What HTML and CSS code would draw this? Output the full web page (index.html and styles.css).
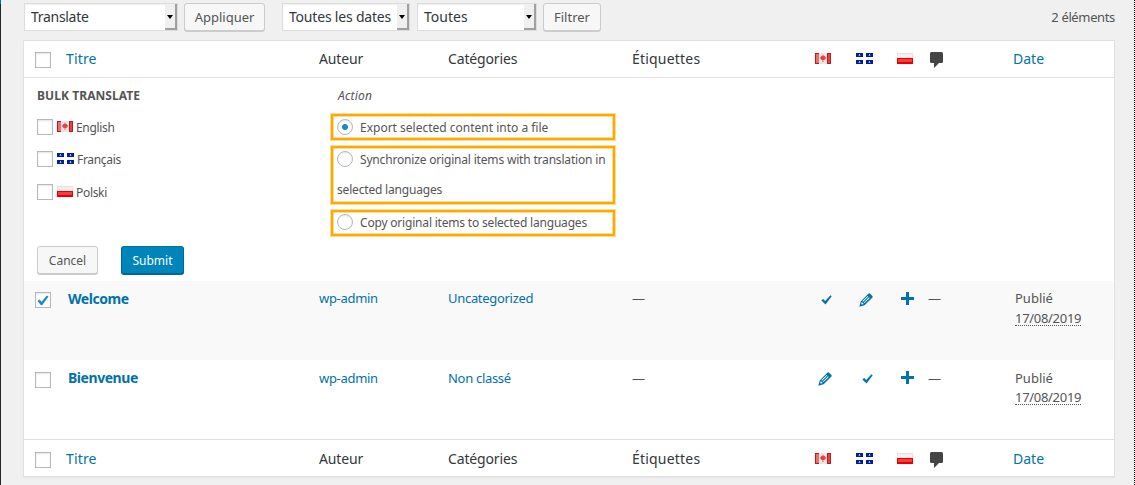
FILE: index.html
```html
<!DOCTYPE html>
<html lang="fr">
<head>
<meta charset="utf-8">
<title>Articles</title>
<link rel="stylesheet" href="styles.css">
</head>
<body>
<svg class="defs" width="0" height="0" aria-hidden="true">
  <symbol id="ca" viewBox="0 0 16 11">
    <rect width="16" height="11" fill="#c91515"/>
    <rect x="1" y="1" width="3" height="9" fill="#ea7070"/><rect x="13" y="1" width="2" height="9" fill="#d84848"/>
    <rect x="4" width="8" height="11" fill="#f0e2e2"/>
    <path d="M8 1.500l1 1.700 1-.3v1.300l1.400.4-2 2.300H8.400V9h-.8V6.900H6.600l-2-2.300L6 4.200V2.900l1 .3z" fill="#e24444"/>
  </symbol>
  <symbol id="qc" viewBox="0 0 17 11">
    <rect width="17" height="11" fill="#fff"/>
    <path d="M0 0h7v4H0zM10 0h7v4h-7zM0 7h7v4H0zM10 7h7v4h-7z" fill="#00209a"/>
    <path d="M3 1h1v2H3zM13 1h1v2h-1zM3 8h1v2H3zM13 8h1v2h-1z" fill="#b9c4ec"/>
    <path d="M2 2h3v1H2zM12 2h3v1h-3zM2 9h3v1H2zM12 9h3v1h-3z" fill="#7185cc" opacity=".4"/>
  </symbol>
  <symbol id="pl" viewBox="0 0 16 11">
    <rect width="16" height="11" fill="#f0dada"/><rect x="1" y="1" width="14" height="5" fill="#f8f0f0"/>
    <rect y="5" width="16" height="6" fill="#e80000"/><rect x="1" y="6" width="14" height="3" fill="#f63c3c"/>
  </symbol>
  <symbol id="comment" viewBox="0 0 13 16">
    <path d="M1.500 0h10Q13 0 13 1.500v8Q13 11 11.500 11H9l-5 5v-5H1.500Q0 11 0 9.500v-8Q0 0 1.500 0z" fill="#444"/>
  </symbol>
  <symbol id="check" viewBox="0 0 11 10">
    <path d="M.3 5.500L2.200 4l2 2L9.500.2l1.200 1.100L4.600 9.600z" fill="#0073aa"/>
  </symbol>
  <symbol id="pencil" viewBox="0 0 14 14">
    <path d="M.3 13.700l1.400-5.300L9.300.8Q10.300-.1 11.400.9l1.800 1.800q1 1 0 2L5.600 12.300z" fill="#0073aa"/>
    <path d="M2.800 9.100l1.900 1.900-1.800.6-.7-.7zM3.500 8.100l5.200-5.200.6.600-5.200 5.200zM4.900 9.500l5.200-5.200.6.600-5.200 5.200z" fill="#fff"/>
  </symbol>
  <symbol id="plus" viewBox="0 0 13 13">
    <path d="M5 0h3v5h5v3H8v5H5V8H0V5h5z" fill="#0073aa"/>
  </symbol>
</svg>
<div class="page">
  <div class="menu-edge"></div>
  <main class="content">
    <div class="toolbar">
      <div class="select s-action"><span>Translate</span><i class="arrow"></i></div>
      <button class="button b-apply"><span>Appliquer</span></button>
      <div class="select s-dates"><span>Toutes les dates</span><i class="arrow"></i></div>
      <div class="select s-cats"><span>Toutes</span><i class="arrow"></i></div>
      <button class="button b-filter"><span>Filtrer</span></button>
      <span class="count">2 éléments</span>
    </div>
    <div class="table">
      <div class="row head">
        <div><i class="cb"></i></div><a class="t-titre">Titre</a><span class="t-auteur">Auteur</span><span class="t-cat">Catégories</span><span class="t-tag">Étiquettes</span>
        <svg width="16" height="11"><use href="#ca"/></svg><svg width="17" height="11"><use href="#qc"/></svg><svg width="16" height="11"><use href="#pl"/></svg><svg class="comment" width="13" height="16"><use href="#comment"/></svg><a class="t-date">Date</a>
      </div>
      <div class="bulk">
        <div class="bulk-cols">
          <div class="langs">
            <div class="legend"><span>BULK TRANSLATE</span></div>
            <label><i class="cb"></i><svg width="16" height="11"><use href="#ca"/></svg><span>English</span></label>
            <label><i class="cb"></i><svg width="17" height="11"><use href="#qc"/></svg><span>Français</span></label>
            <label><i class="cb"></i><svg width="16" height="11"><use href="#pl"/></svg><span>Polski</span></label>
          </div>
          <div class="actions">
            <div class="action-title"><span>Action</span></div>
            <label class="option"><i class="radio on"></i><span>Export selected content into a file</span></label>
            <label class="option tall"><i class="radio"></i><span>Synchronize original items with translation in</span><br><span>selected languages</span></label>
            <label class="option last"><i class="radio"></i><span>Copy original items to selected languages</span></label>
          </div>
        </div>
        <div class="bulk-buttons">
          <button class="button b-cancel"><span>Cancel</span></button>
          <button class="button primary"><span>Submit</span></button>
        </div>
      </div>
      <div class="row item alt">
        <div><i class="cb"><svg width="12" height="11"><path d="M.5 6L2.500 4.500l2.200 2.200L9.700.500l1.800 1L5.200 10.200H4z" fill="#1e8cbe"/></svg></i></div><a class="title">Welcome</a><a class="cell">wp-admin</a><a class="cell">Uncategorized</a><span class="dash">—</span>
        <svg class="ic-check" width="11" height="10"><use href="#check"/></svg><svg class="ic-pencil" width="14" height="14"><use href="#pencil"/></svg><svg class="ic-plus" width="13" height="13"><use href="#plus"/></svg><span class="dash d2">—</span><div class="date"><span>Publié</span><br><abbr>17/08/2019</abbr></div>
      </div>
      <div class="row item plain">
        <div><i class="cb"></i></div><a class="title">Bienvenue</a><a class="cell">wp-admin</a><a class="cell">Non classé</a><span class="dash">—</span>
        <svg class="ic-pencil p1" width="14" height="14"><use href="#pencil"/></svg><svg class="ic-check" width="11" height="10"><use href="#check"/></svg><svg class="ic-plus" width="13" height="13"><use href="#plus"/></svg><span class="dash d2">—</span><div class="date"><span>Publié</span><br><abbr>17/08/2019</abbr></div>
      </div>
      <div class="row head foot">
        <div><i class="cb"></i></div><a class="t-titre">Titre</a><span class="t-auteur">Auteur</span><span class="t-cat">Catégories</span><span class="t-tag">Étiquettes</span>
        <svg width="16" height="11"><use href="#ca"/></svg><svg width="17" height="11"><use href="#qc"/></svg><svg width="16" height="11"><use href="#pl"/></svg><svg class="comment" width="13" height="16"><use href="#comment"/></svg><a class="t-date">Date</a>
      </div>
    </div>
  </main>
</div>
</body>
</html>
```
FILE: styles.css
```css
* { box-sizing: border-box; }
body { margin: 0; background: #f0f0f0; color: #555; font: 13px/20px "Noto Sans", "Open Sans", sans-serif; overflow: hidden; }
svg { display: block; }
.defs { position: absolute; }
a { color: #0073aa; }
.page { display: flex; width: 1135px; height: 485px; border-right: 1px dotted #000; }
.menu-edge { width: 1px; background: linear-gradient(#0073aa 4px, #23282d 4px); }
.content { width: 1114px; padding: 3px 0 0 22px; }
.toolbar { display: flex; align-items: flex-start; height: 37px; padding-left: 1px; }
.select { height: 28px; display: flex; justify-content: space-between; background: #fff; border: 1px solid #ddd; padding-left: 6px; font-size: 14px; line-height: 26px; color: #32373c; white-space: nowrap; box-shadow: inset 0 1px 2px rgba(0,0,0,.07); }
.arrow { width: 12px; height: 26px; background: #f0f0f0; border-right: 2px solid #a0a0a0; border-bottom: 2px solid #a0a0a0; display: flex; justify-content: center; padding-top: 11px; }
.arrow::before { content: ""; height: 0; border: 3px solid transparent; border-top: 4px solid #000; border-bottom: 0; }
.s-action { width: 154px; letter-spacing: -.3px; }
.s-dates { width: 128px; margin-left: 17px; letter-spacing: -.2px; }
.s-cats { width: 120px; margin-left: 7px; }
.button { height: 28px; padding: 0; border: 1px solid #ccc; border-radius: 3px; background: #f7f7f7; box-shadow: 0 1px 0 #ccc; color: #555; font: 13px/25px "Noto Sans", "Open Sans", sans-serif; white-space: nowrap; }
.b-apply { width: 81px; margin-left: 6px; }
.b-filter { width: 58px; margin-left: 6px; }
.count { margin: 4px 0 0 auto; letter-spacing: -.36px; white-space: nowrap; }
.table { width: 1092px; height: 437px; background: #fff; border: 1px solid #e1e1e1; box-shadow: 0 1px 1px rgba(0,0,0,.04); }
.row { display: grid; grid-template-columns: 42px 253px 129px 184px 183px 41px 41px 33px 83px 101px; align-items: start; white-space: nowrap; }
.head { height: 37px; border-bottom: 1px solid #e1e1e1; padding-top: 8px; font-size: 14px; color: #32373c; }
.head > svg { margin-top: 4px; }
.head > .comment { margin-top: 3px; }
.foot { border-top: 1px solid #e1e1e1; border-bottom: 0; padding-top: 9px; }
.t-titre { letter-spacing: .15px; }
.t-auteur, .t-cat { letter-spacing: -.15px; }
.t-tag { letter-spacing: .2px; }
.cb { display: block; width: 16px; height: 16px; border: 1px solid #b4b9be; background: #fff; box-shadow: inset 0 1px 2px rgba(0,0,0,.1); }
.row .cb { margin-left: 11px; }
.head .cb { margin-top: 3px; }
.cb svg { margin: 2px 0 0 2px; }
.bulk { height: 203px; font-size: 12px; padding-left: 13px; }
.bulk-cols { display: flex; height: 168px; }
.langs { width: 294px; padding-top: 8px; }
.legend { font-weight: 700; height: 33px; letter-spacing: .07px; }
.langs label { display: flex; align-items: flex-start; height: 32px; }
.langs label:nth-child(3) { height: 33px; }
.langs label svg { margin: 2px 3px 0 4px; }
.langs label span { margin-top: -1px; letter-spacing: -.32px; }
.actions { width: 284px; padding-top: 8px; }
.action-title { font-style: italic; padding-left: 7px; height: 28px; letter-spacing: .2px; }
.option { display: block; height: 26px; margin-bottom: 6px; border: 2px solid #ffa800; box-shadow: 0 0 0 1px #ffdc96, inset 0 0 0 1px #ffdc96; padding-left: 4px; line-height: 30px; white-space: nowrap; }
.option span { display: inline-block; height: 30px; margin-top: -3px; vertical-align: top; }
.option.tall { height: 58px; letter-spacing: -.18px; }
.option.tall br + span { margin-top: -3px; }
.option.last { letter-spacing: -.19px; }
.option.last span { margin-top: -4px; }
.radio { display: inline-block; width: 16px; height: 16px; border: 1px solid #b4b9be; border-radius: 50%; margin: 3px 7px 0 0; vertical-align: top; box-shadow: inset 0 1px 2px rgba(0,0,0,.1); background: #fff; }
.last .radio { margin-top: 2px; }
.radio.on { background: radial-gradient(circle, #1e8cbe 2.700px, #fff 3.300px); }
.bulk-buttons { display: flex; gap: 23px; }
.bulk-buttons .button { font-size: 12px; }
.b-cancel { width: 61px; }
.bulk-buttons .primary { width: 63px; background: #0085ba; border-color: #0073aa #006799 #006799; box-shadow: 0 1px 0 #006799; color: #fff; }
.item { height: 79px; padding-top: 8px; }
.alt { background: #f9f9f9; }
.item .cb { margin-top: 3px; }
.plain .cb { margin-top: 4px; }
.title { font-size: 14px; font-weight: 700; padding-left: 2px; letter-spacing: -.45px; }
.cell { letter-spacing: -.3px; }
.date { padding-left: 2px; }
.alt .cell, .alt .dash, .alt .date { margin-top: -1px; }
abbr { border-bottom: 1px dotted #555; line-height: 14px; display: inline-block; letter-spacing: -.3px; }
.plain abbr { margin-top: 2px; vertical-align: top; }
.dash { display: block; }
.d2 { margin-left: -2px; }
.ic-check { margin: 6px 0 0 6px; }
.ic-pencil { margin: 4px 0 0 3px; }
.ic-plus { margin: 3px 0 0 4px; }
.item .cb svg { margin-left: 1px; }
```
